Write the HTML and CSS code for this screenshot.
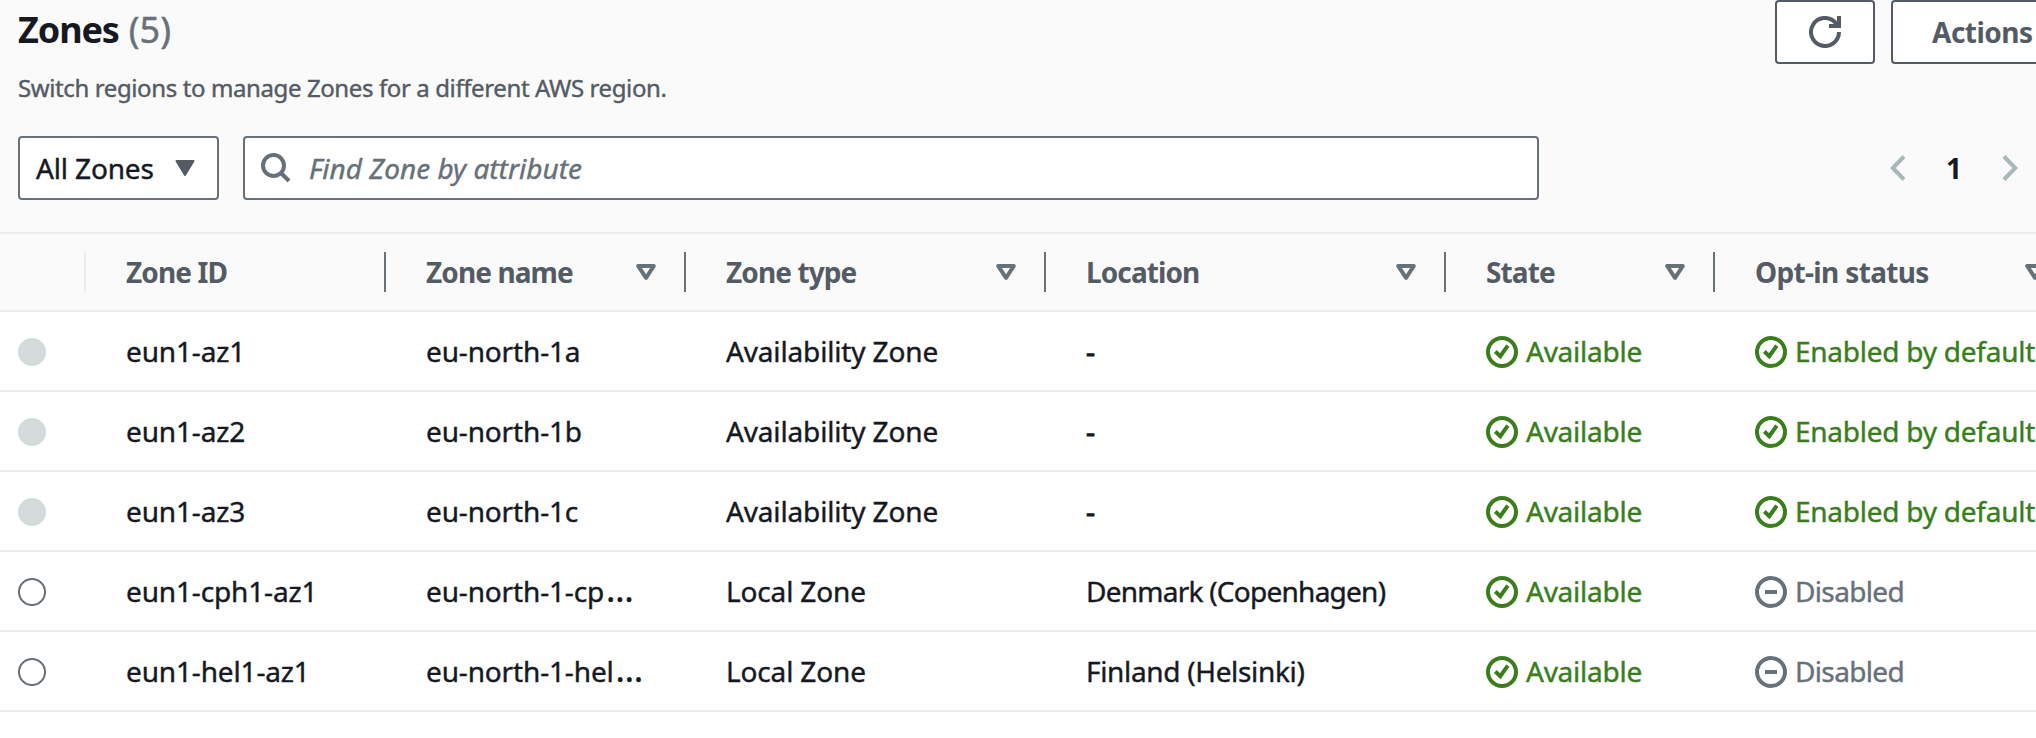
FILE: index.html
```
<!DOCTYPE html>
<html lang="en">
<head>
<meta charset="utf-8">
<title>Zones</title>
<link rel="stylesheet" href="styles.css">
</head>
<body>
<svg class="defs" width="0" height="0" aria-hidden="true">
  <symbol id="ok" viewBox="0 0 32 32"><circle cx="16" cy="16" r="14" fill="none" stroke="currentColor" stroke-width="4"/><path d="M9.300 15.500l5 4.700 7.500-10.500" fill="none" stroke="currentColor" stroke-width="4"/></symbol>
  <symbol id="off" viewBox="0 0 32 32"><circle cx="16" cy="16" r="14" fill="none" stroke="currentColor" stroke-width="4"/><path d="M10 16h12" stroke="currentColor" stroke-width="4"/></symbol>
  <symbol id="sort" viewBox="0 0 20 16"><path d="M2.200 2h15.600L10 13.800z" fill="none" stroke="currentColor" stroke-width="4" stroke-linejoin="round"/></symbol>
</svg>
<header class="head">
  <div class="title-row">
    <div>
      <h1 class="title"><span>Zones</span><span class="count">(5)</span></h1>
      <p class="desc">Switch regions to manage Zones for a different AWS region.</p>
    </div>
    <div class="buttons">
      <button class="btn refresh" aria-label="Refresh"><svg width="32" height="32" viewBox="0 0 32 32" fill="none" stroke="currentColor" stroke-width="4"><path d="M30 16a14 14 0 1 1-4-9.800L29 10"/><path d="M20 10h10V0"/></svg></button>
      <button class="btn actions">Actions</button>
    </div>
  </div>
  <div class="filters">
    <div class="select"><span>All Zones</span><svg width="20" height="16" viewBox="0 0 20 16"><path d="M1.500 1h17L10 15z" fill="currentColor" stroke="currentColor" stroke-width="2" stroke-linejoin="round"/></svg></div>
    <div class="search"><svg width="30" height="30" viewBox="0 0 30 30" fill="none" stroke="currentColor" stroke-width="4"><circle cx="12.500" cy="12.500" r="10.500"/><path d="M20 20l8 8"/></svg><span>Find Zone by attribute</span></div>
    <div class="pages">
      <svg width="16" height="26" viewBox="0 0 16 26" fill="none" stroke="currentColor" stroke-width="4"><path d="M14 1.500L2.800 13 14 24.500"/></svg>
      <b>1</b>
      <svg width="16" height="26" viewBox="0 0 16 26" fill="none" stroke="currentColor" stroke-width="4"><path d="M2 1.500L13.200 13 2 24.500"/></svg>
    </div>
  </div>
</header>
<main class="table">
  <div class="row th">
    <div></div>
    <div><span>Zone ID</span></div>
    <div><span>Zone name</span><svg class="sort"><use href="#sort"/></svg></div>
    <div><span>Zone type</span><svg class="sort"><use href="#sort"/></svg></div>
    <div><span>Location</span><svg class="sort"><use href="#sort"/></svg></div>
    <div><span>State</span><svg class="sort"><use href="#sort"/></svg></div>
    <div><span class="optin">Opt-in status</span><svg class="sort"><use href="#sort"/></svg></div>
  </div>
  <div class="row"><div><i class="radio dis"></i></div><div><span>eun1-az1</span></div><div><span>eu-north-1a</span></div><div><span>Availability Zone</span></div><div><span class="dash">-</span></div><div class="ok"><svg><use href="#ok"/></svg><span>Available</span></div><div class="ok"><svg><use href="#ok"/></svg><span>Enabled by default</span></div></div>
  <div class="row"><div><i class="radio dis"></i></div><div><span>eun1-az2</span></div><div><span>eu-north-1b</span></div><div><span>Availability Zone</span></div><div><span class="dash">-</span></div><div class="ok"><svg><use href="#ok"/></svg><span>Available</span></div><div class="ok"><svg><use href="#ok"/></svg><span>Enabled by default</span></div></div>
  <div class="row"><div><i class="radio dis"></i></div><div><span>eun1-az3</span></div><div><span>eu-north-1c</span></div><div><span>Availability Zone</span></div><div><span class="dash">-</span></div><div class="ok"><svg><use href="#ok"/></svg><span>Available</span></div><div class="ok"><svg><use href="#ok"/></svg><span>Enabled by default</span></div></div>
  <div class="row"><div><i class="radio"></i></div><div><span>eun1-cph1-az1</span></div><div><span>eu-north-1-cp<span class="more">…</span></span></div><div><span>Local Zone</span></div><div><span class="tight">Denmark (Copenhagen)</span></div><div class="ok"><svg><use href="#ok"/></svg><span>Available</span></div><div class="off"><svg><use href="#off"/></svg><span>Disabled</span></div></div>
  <div class="row"><div><i class="radio"></i></div><div><span>eun1-hel1-az1</span></div><div><span>eu-north-1-hel<span class="more">…</span></span></div><div><span>Local Zone</span></div><div><span class="snug">Finland (Helsinki)</span></div><div class="ok"><svg><use href="#ok"/></svg><span>Available</span></div><div class="off"><svg><use href="#off"/></svg><span>Disabled</span></div></div>
</main>
</body>
</html>
```
FILE: styles.css
```
* { box-sizing: border-box; }
html, body { margin: 0; overflow: hidden; }
body { width: 2036px; height: 738px; background: #fff; color: #16191f; font: 28px/40px "Noto Sans", "Open Sans", sans-serif; letter-spacing: -0.15px; -webkit-text-stroke: 0.4px currentColor; white-space: nowrap; }
.defs { display: block; height: 0; }
.head { height: 232px; background: #fafafa; padding-left: 18px; }
.title-row { display: flex; justify-content: space-between; height: 136px; }
.title { margin: 6px 0 0; font-size: 36px; line-height: 48px; font-weight: 700; letter-spacing: -1.1px; display: flex; gap: 10px; -webkit-text-stroke: 0; }
.count { font-weight: 400; letter-spacing: 0; color: #687078; -webkit-text-stroke: 0.4px currentColor; }
.desc { margin: 16px 0 0; font-size: 24px; line-height: 36px; letter-spacing: -0.39px; color: #545b64; }
.buttons { display: flex; gap: 16px; width: 261px; flex: none; }
.btn { height: 64px; flex: none; border: 2px solid #545b64; border-radius: 4px; background: #fff; color: #545b64; font: 700 28px/40px "Noto Sans", "Open Sans", sans-serif; letter-spacing: -0.5px; -webkit-text-stroke: 0; display: flex; align-items: center; padding: 0; }
.refresh { width: 100px; justify-content: center; }
.actions { width: 240px; padding-left: 39px; }
.filters { display: flex; height: 64px; }
.select { width: 201px; border: 2px solid #687078; border-radius: 4px; background: #fff; display: flex; align-items: center; justify-content: space-between; padding: 0 22px 0 16px; }
.select svg { color: #545b64; }
.search { width: 1296px; margin-left: 24px; border: 2px solid #687078; border-radius: 4px; background: #fff; color: #687078; font-style: italic; letter-spacing: 0; display: flex; align-items: center; gap: 18px; padding-left: 16px; }
.pages { margin-left: 351px; width: 128px; display: flex; align-items: center; justify-content: space-between; color: #aab7b8; }
.pages b { color: #16191f; -webkit-text-stroke: 0; }
.row { display: grid; grid-template-columns: 86px 300px 300px 360px 400px 269px 360px; height: 80px; border-bottom: 2px solid #eaeded; }
.row > div { display: flex; align-items: center; padding: 2px 0 0 40px; }
.row > div:first-child { padding-left: 18px; }
.row > div > span { margin-top: -2px; }
.row > .ok { letter-spacing: -0.25px; }
.row > .off { letter-spacing: -0.65px; }
.th { border-top: 2px solid #eaeded; background: #fafafa; color: #545b64; font-weight: 700; letter-spacing: -0.9px; -webkit-text-stroke: 0; }
.th > div { height: 40px; margin-top: 18px; border-right: 2px solid #687078; justify-content: space-between; padding: 0 28px 0 40px; }
.th > div:first-child { border-color: #eaeded; }
.row.th > div > span { margin-top: 0; }
.optin { letter-spacing: -0.65px; }
.tight { letter-spacing: -0.75px; }
.snug { letter-spacing: -0.33px; }
.dash { -webkit-text-stroke: 1px currentColor; }
.more { margin-left: 2px; font-size: 35px; line-height: 1; }
.sort { width: 20px; height: 16px; color: #687078; flex: none; }
.row svg:not(.sort) { width: 32px; height: 32px; margin-right: 8px; flex: none; }
.radio { width: 28px; height: 28px; border: 2px solid #687078; border-radius: 50%; background: #fff; }
.dis { background: #d5dbdb; border-color: #d5dbdb; }
.ok { color: #3a7d1c; }
.off { color: #687078; }
```
